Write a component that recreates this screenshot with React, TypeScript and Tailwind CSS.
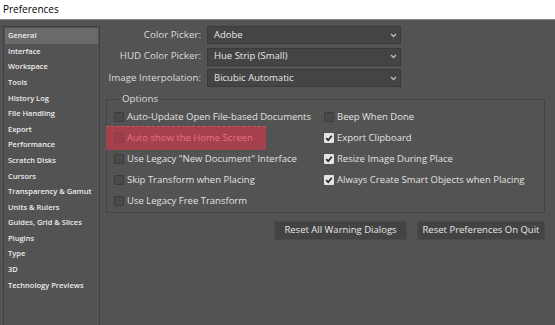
import React from "react";

const sidebar = [
  "General",
  "Interface",
  "Workspace",
  "Tools",
  "History Log",
  "File Handling",
  "Export",
  "Performance",
  "Scratch Disks",
  "Cursors",
  "Transparency & Gamut",
  "Units & Rulers",
  "Guides, Grid & Slices",
  "Plugins",
  "Type",
  "3D",
  "Technology Previews",
];

function Box({ checked, dim }: { checked?: boolean; dim?: boolean }) {
  if (checked)
    return (
      <div className="w-[10px] h-[10px] rounded-[1px] bg-[#e4e4e4] flex items-center justify-center shrink-0">
        <svg width="8" height="8" viewBox="0 0 8 8">
          <path d="M1.2 4.2 L3.2 6.2 L6.8 1.8" stroke="#2a2a2a" strokeWidth="1.7" fill="none" />
        </svg>
      </div>
    );
  return (
    <div
      className={
        "w-[10px] h-[10px] rounded-[1px] border shrink-0 " +
        (dim ? "border-[#8a3a46] bg-[#9c3d4a]" : "border-[#3c3c3c] bg-[#4a4a4a]")
      }
    />
  );
}

function Select({ value }: { value: string }) {
  return (
    <div className="w-[194px] h-[18px] bg-[#444444] border border-[#3a3a3a] flex items-center pl-[6px] pr-[3px] text-[#e8e8e8]">
      <span className="flex-1 whitespace-nowrap">{value}</span>
      <svg width="7" height="5" viewBox="0 0 7 5">
        <path d="M1 1 L3.5 3.5 L6 1" stroke="#bdbdbd" strokeWidth="1.3" fill="none" />
      </svg>
    </div>
  );
}

function Row({ label, checked, highlight }: { label: string; checked?: boolean; highlight?: boolean }) {
  return (
    <div className="relative h-[20.9px] flex items-center gap-[3px]">
      <Box checked={checked} dim={highlight} />
      <span className={"whitespace-nowrap " + (highlight ? "text-[#e8707f]" : "text-[#e2e2e2]")}>
        {label}
      </span>
    </div>
  );
}

export default function App() {
  return (
    <div
      className="w-[555px] h-[325px] bg-[#535353] flex flex-col overflow-hidden text-[9.5px]"
      style={{ fontFamily: '"Open Sans", "Noto Sans", sans-serif' }}
    >
      <div className="h-[20px] bg-white border-b border-[#8a8a8a] flex items-center pl-[3px] text-[10px] text-black shrink-0">
        Preferences
      </div>
      <div className="flex flex-1 min-h-0">
        <div className="ml-[3px] mt-[6px] w-[97px] shrink-0 border border-[#3f3f3f] border-b-0 pt-[1px] px-[1px] text-[7.5px] font-semibold text-[#ececec]">
          {sidebar.map((s, i) => (
            <div
              key={s}
              className={
                "h-[15.6px] flex items-center pl-[3px] whitespace-nowrap " +
                (i === 0 ? "bg-[#6a6a6a]" : "")
              }
            >
              {s}
            </div>
          ))}
        </div>
        <div className="flex-1 pl-[6px] pr-[9px] pt-[6px] text-[#dcdcdc]">
          <div className="flex flex-col gap-[3.5px]">
            {[
              ["Color Picker:", "Adobe"],
              ["HUD Color Picker:", "Hue Strip (Small)"],
              ["Image Interpolation:", "Bicubic Automatic"],
            ].map(([l, v]) => (
              <div key={l} className="flex items-center gap-[6px]">
                <div className="w-[95px] text-right whitespace-nowrap text-[9.8px]">{l}</div>
                <Select value={v} />
              </div>
            ))}
          </div>
          <div className="relative mt-[12px] border border-[#444444] h-[114px] w-[439px]">
            <div className="absolute -top-[8px] left-[11px] bg-[#535353] px-[4px] text-[9.8px] leading-[14px] text-[#dcdcdc]">
              Options
            </div>
            <div className="absolute left-[-1px] top-[26px] w-[160px] h-[24px] bg-[#a5404d] border-t border-dashed border-[#c25a66]" />
            <div className="relative flex pt-[7px] pl-[7px]">
              <div className="w-[210px] flex flex-col">
                <Row label="Auto-Update Open File-based Documents" />
                <Row label="Auto show the Home Screen" highlight />
                <Row label={'Use Legacy "New Document" Interface'} />
                <Row label="Skip Transform when Placing" />
                <Row label="Use Legacy Free Transform" />
              </div>
              <div className="flex flex-col">
                <Row label="Beep When Done" />
                <Row label="Export Clipboard" checked />
                <Row label="Resize Image During Place" checked />
                <Row label="Always Create Smart Objects when Placing" checked />
              </div>
            </div>
          </div>
          <div className="flex justify-end gap-[10px] mt-[8px] pr-[1px]">
            <div className="w-[133px] h-[19px] bg-[#434343] border border-[#4a4a4a] flex items-center justify-center text-[#e6e6e6] whitespace-nowrap">
              Reset All Warning Dialogs
            </div>
            <div className="w-[128px] h-[19px] bg-[#434343] border border-[#4a4a4a] flex items-center justify-center text-[#e6e6e6] whitespace-nowrap">
              Reset Preferences On Quit
            </div>
          </div>
        </div>
      </div>
    </div>
  );
}
